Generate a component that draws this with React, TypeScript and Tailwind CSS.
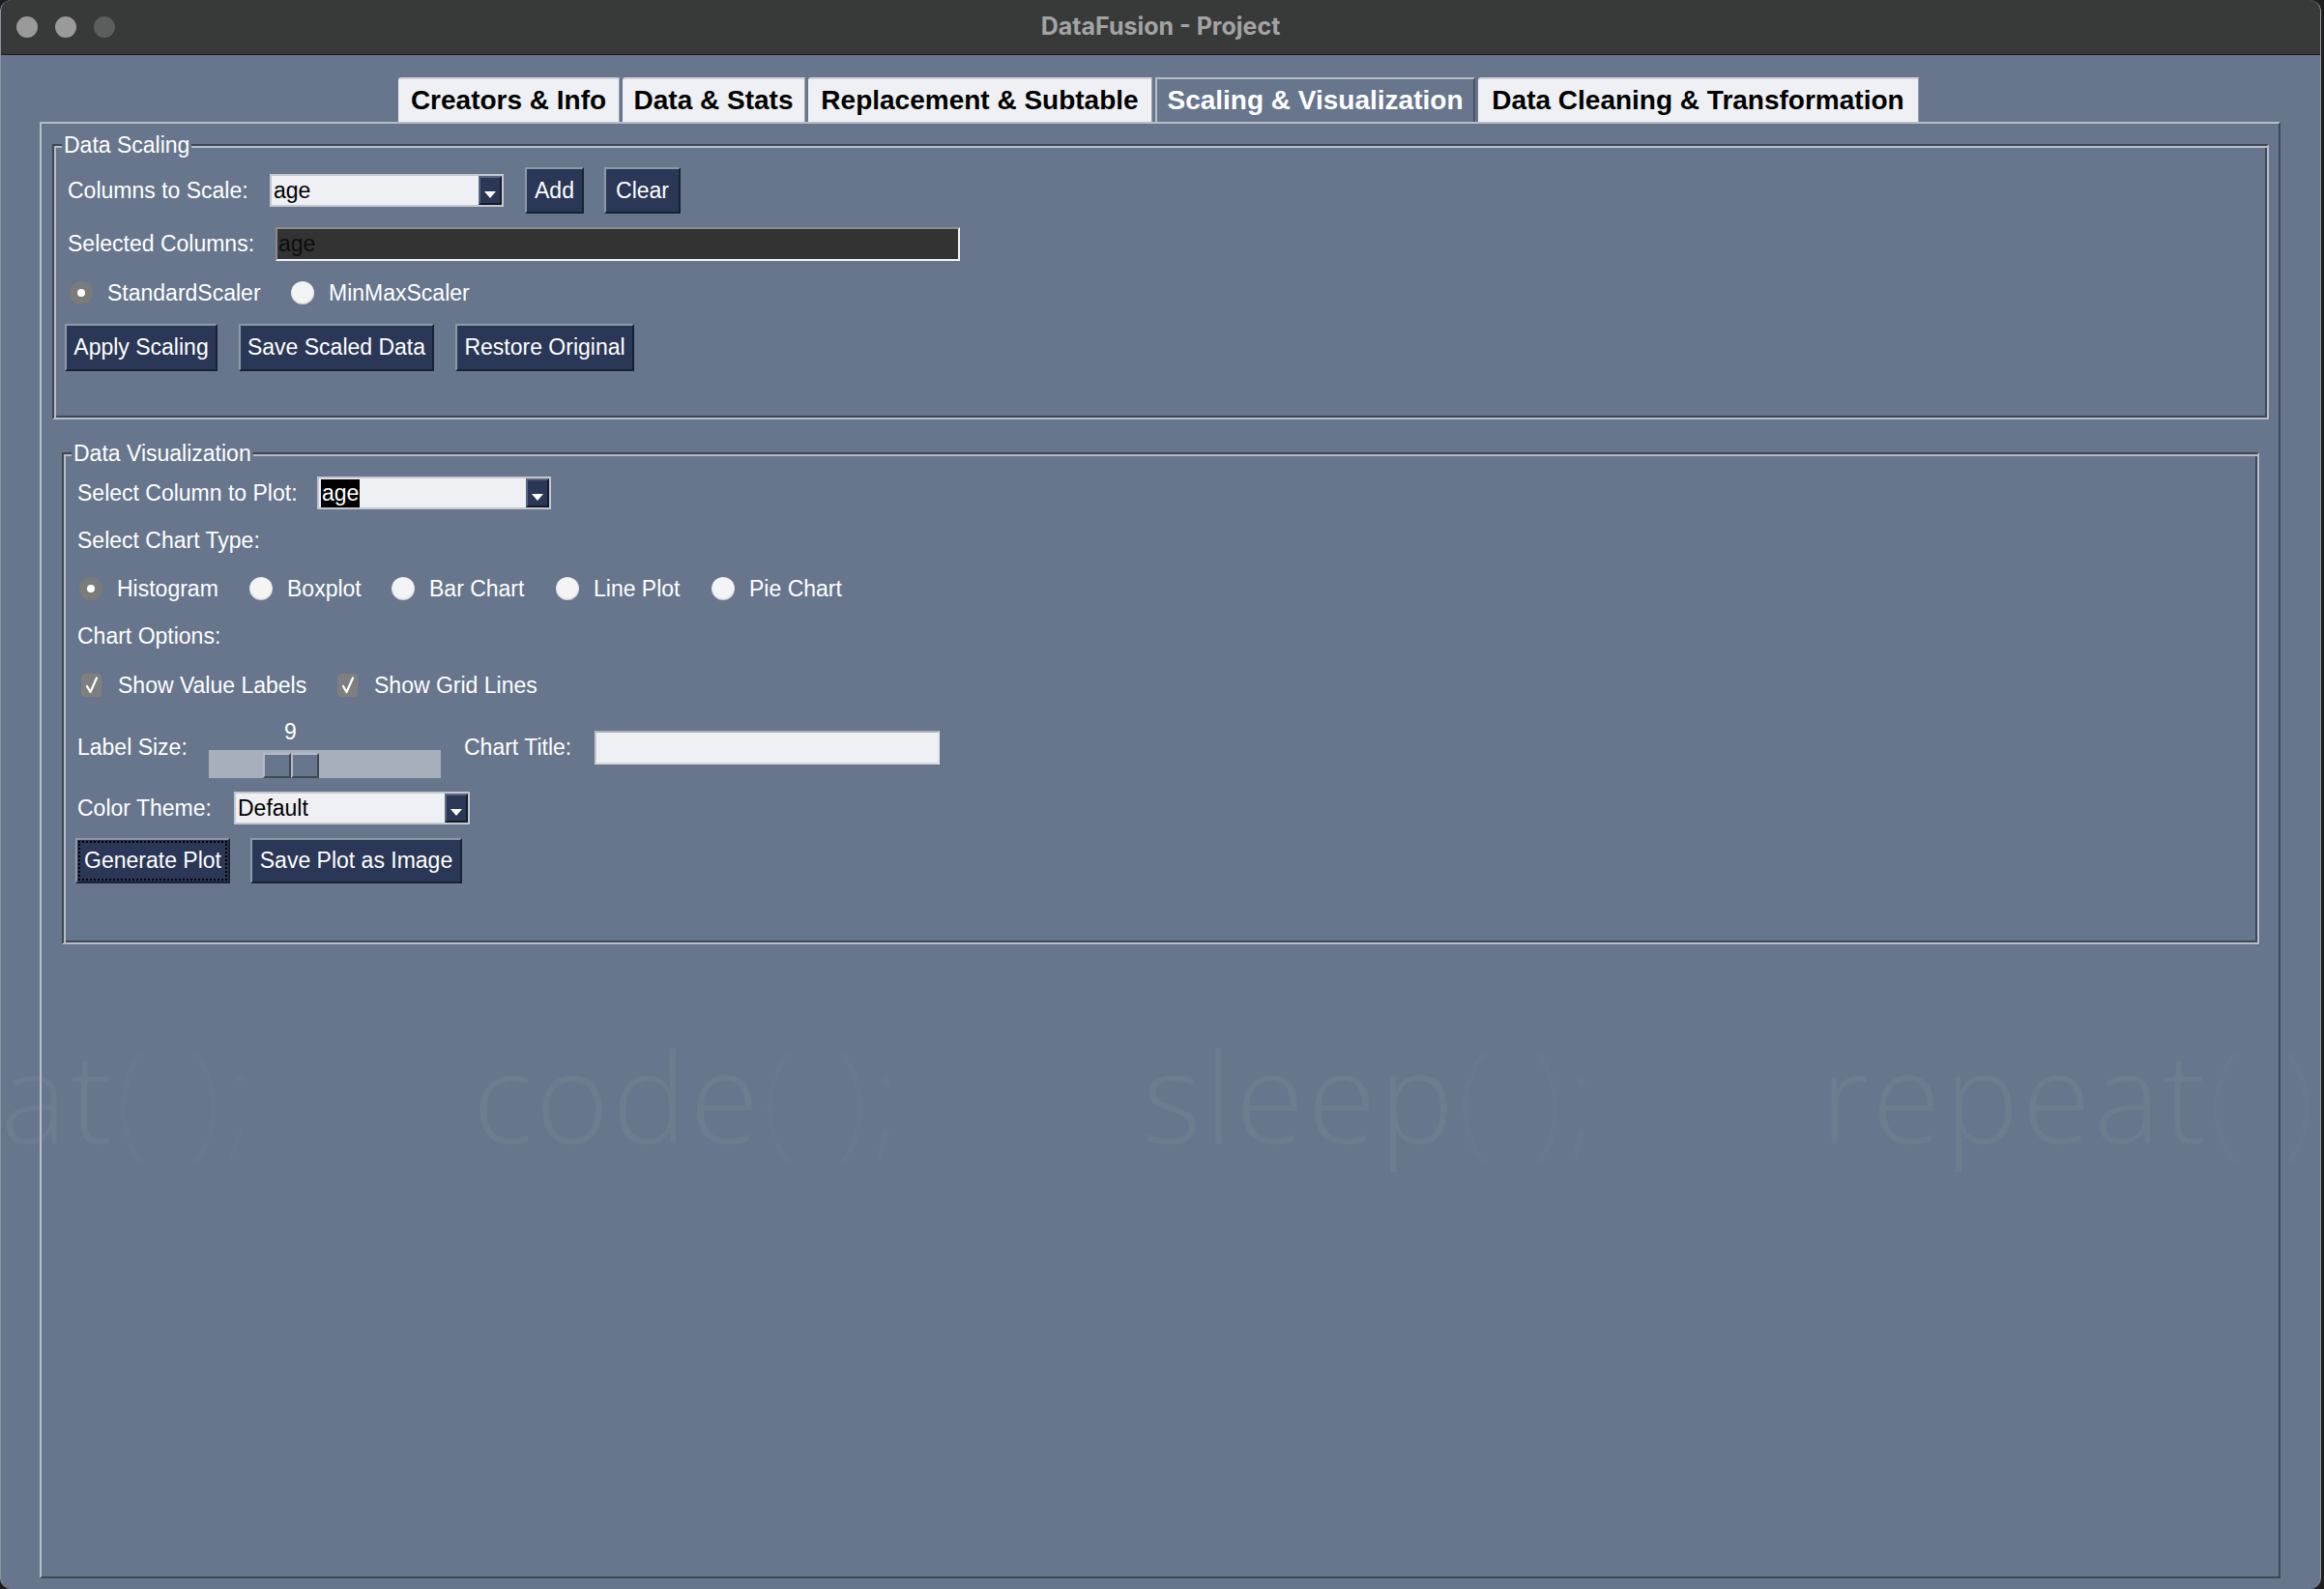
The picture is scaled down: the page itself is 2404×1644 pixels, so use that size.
import React from "react";

type Kids = { children?: React.ReactNode; className?: string };

function Btn({ children, className = "", focused = false }: Kids & { focused?: boolean }) {
  return (
    <button
      type="button"
      className={`flex h-full items-center justify-center border-2 border-t-[#8f98a7] border-l-[#8f98a7] border-r-[#1a2132] border-b-[#1a2132] bg-[#2b3756] text-[23px] leading-none text-white ${
        focused ? "outline-2 outline-dotted outline-offset-[-5px] outline-black" : ""
      } ${className}`}
    >
      {children}
    </button>
  );
}

function Arrow() {
  return (
    <span className="flex w-[24px] shrink-0 items-end justify-center border-2 border-t-[#5b6680] border-l-[#5b6680] border-r-[#141a28] border-b-[#141a28] bg-[#2b3756] pb-[5px]">
      <svg width="12" height="7" viewBox="0 0 12 7">
        <path d="M0 0H12L6 7Z" fill="#ffffff" />
      </svg>
    </span>
  );
}

function Combo({ children, className = "" }: Kids) {
  return (
    <div className={`flex h-[34px] border-2 border-[#c3c8d0] bg-[#eef0f3] ${className}`}>
      <div className="flex flex-1 items-center pl-[2px] text-[23px] leading-none text-black">{children}</div>
      <Arrow />
    </div>
  );
}

function Radio({ on = false }: { on?: boolean }) {
  return on ? (
    <span className="flex h-[24px] w-[24px] shrink-0 items-center justify-center rounded-full bg-[#7b7b7b]">
      <span className="h-[8px] w-[8px] rounded-full bg-white" />
    </span>
  ) : (
    <span className="h-[24px] w-[24px] shrink-0 rounded-full bg-[#f4f4f4] shadow-[inset_0_-1px_2px_rgba(0,0,0,0.18)]" />
  );
}

function RadioItem({ on = false, label, className = "" }: { on?: boolean; label: string; className?: string }) {
  return (
    <div className={`flex items-center gap-[15px] ${className}`}>
      <Radio on={on} />
      <span className="text-[23px] leading-none text-white">{label}</span>
    </div>
  );
}

function Check({ label, className = "" }: { label: string; className?: string }) {
  return (
    <div className={`flex items-center gap-[17px] ${className}`}>
      <span className="flex h-[24px] w-[21px] shrink-0 items-center justify-center rounded-[4px] bg-[#7f7f7f]">
        <svg width="14" height="18" viewBox="0 0 14 18">
          <path d="M2 10 L5.5 16 L12 1.5" fill="none" stroke="#ffffff" strokeWidth="2.2" strokeLinecap="round" strokeLinejoin="round" />
        </svg>
      </span>
      <span className="text-[23px] leading-none text-white">{label}</span>
    </div>
  );
}

function Group({ title, children, className = "" }: Kids & { title: string }) {
  return (
    <div
      className={`relative flex flex-col border-2 border-t-[#3f4756] border-l-[#3f4756] border-r-[#b7bec9] border-b-[#b7bec9] shadow-[inset_2px_2px_0_#b7bec9,inset_-2px_-2px_0_#3f4756] ${className}`}
    >
      <span className="absolute left-[8px] top-[-16px] bg-[#67768d] px-[2px] text-[23px] leading-[30px] text-white">
        {title}
      </span>
      {children}
    </div>
  );
}

function Label({ children, className = "" }: Kids) {
  return <span className={`shrink-0 text-[23px] leading-none text-white ${className}`}>{children}</span>;
}

function Tab({ children, active = false, className = "" }: Kids & { active?: boolean }) {
  return active ? (
    <div
      className={`relative z-10 mb-[-2px] flex h-[48px] items-center justify-center border-t-2 border-l-2 border-r-2 border-t-[#b7bec9] border-l-[#b7bec9] border-r-[#4a5464] bg-[#67768d] pb-[2px] text-[28px] font-bold leading-none text-white ${className}`}
    >
      {children}
    </div>
  ) : (
    <div
      className={`flex h-[46px] items-center justify-center rounded-tl-[3px] border-t-2 border-r border-t-[#cfd3d9] border-r-[#9aa1ab] bg-[#eef0f3] text-[28px] font-bold leading-none text-black ${className}`}
    >
      {children}
    </div>
  );
}

// faint "eat(); code(); sleep(); repeat();" backdrop behind the notebook
function Watermark() {
  const words: [string, string][] = [
    ["eat", "w-[563px]"],
    ["code", "w-[693px]"],
    ["sleep", "w-[701px]"],
    ["repeat", "w-[600px]"],
  ];
  return (
    <div className="pointer-events-none absolute left-[-75px] top-[1068px] z-0 flex font-['Open_Sans',sans-serif] text-[130px] font-light leading-none tracking-[3px] text-[#6e7c90]">
      {words.map(([w, cls]) => (
        <span key={w} className={`shrink-0 whitespace-pre ${cls}`}>
          {w}
          <span className="text-[#69788e]">( );</span>
        </span>
      ))}
    </div>
  );
}

export default function App() {
  return (
    <div className="h-[1644px] w-[2404px] overflow-hidden bg-[#1d1d1d] font-['Liberation_Sans',Arial,sans-serif]">
      <div className="relative flex h-[1644px] w-[2401px] flex-col overflow-hidden rounded-[12px] border-x border-[#8c95a2] bg-[#67768d]">
        <Watermark />

        {/* title bar */}
        <div className="relative z-10 grid h-[57px] shrink-0 grid-cols-[1fr_auto_1fr] items-center border-b border-[#1b1b1b] bg-[#383a3a]">
          <div className="flex gap-[18px] pl-[16px]">
            <span className="h-[22px] w-[22px] rounded-full bg-[#9a9a9a]" />
            <span className="h-[22px] w-[22px] rounded-full bg-[#9a9a9a]" />
            <span className="h-[22px] w-[22px] rounded-full bg-[#5c5d5d]" />
          </div>
          <span className="font-['Inter',sans-serif] text-[25px] font-bold text-[#a3a3a3]">DataFusion - Project</span>
          <span />
        </div>

        {/* notebook tabs */}
        <div className="relative z-10 mt-[23px] flex h-[46px] items-end gap-[3px] pl-[411px]">
          <Tab className="w-[229px]">Creators &amp; Info</Tab>
          <Tab className="w-[189px]">Data &amp; Stats</Tab>
          <Tab className="w-[356px]">Replacement &amp; Subtable</Tab>
          <Tab active className="w-[331px]">
            Scaling &amp; Visualization
          </Tab>
          <Tab className="w-[456px]">Data Cleaning &amp; Transformation</Tab>
        </div>

        {/* notebook pane */}
        <div className="relative z-10 ml-[40px] flex h-[1507px] w-[2318px] flex-col border-2 border-t-[#b7bec9] border-l-[#b7bec9] border-r-[#3f4756] border-b-[#3f4756]">
          <Group title="Data Scaling" className="ml-[11px] mt-[21px] w-[2293px] pb-[48px]">
            <div className="ml-[14px] mt-[22px] flex h-[48px] items-center">
              <Label className="w-[209px]">Columns to Scale:</Label>
              <Combo className="w-[242px]">age</Combo>
              <div className="ml-[22px] flex h-[48px] gap-[21px]">
                <Btn className="w-[61px]">Add</Btn>
                <Btn className="w-[79px]">Clear</Btn>
              </div>
            </div>

            <div className="ml-[14px] mt-[14px] flex h-[35px] items-center">
              <Label className="w-[215px]">Selected Columns:</Label>
              <div className="flex h-[35px] w-[708px] items-center border-2 border-t-[#8c8c8c] border-l-[#8c8c8c] border-r-[#f4f4f4] border-b-[#f4f4f4] bg-[#333333] pl-[1px] text-[23px] leading-none text-[#0d0d0d]">
                age
              </div>
            </div>

            <div className="ml-[16px] mt-[18px] flex h-[30px] items-center">
              <RadioItem on label="StandardScaler" className="w-[229px]" />
              <RadioItem label="MinMaxScaler" />
            </div>

            <div className="ml-[11px] mt-[17px] flex h-[49px] gap-[22px]">
              <Btn className="w-[158px]">Apply Scaling</Btn>
              <Btn className="w-[202px]">Save Scaled Data</Btn>
              <Btn className="w-[185px]">Restore Original</Btn>
            </div>
          </Group>

          <Group title="Data Visualization" className="ml-[21px] mt-[34px] w-[2273px] pb-[61px]">
            <div className="ml-[14px] mt-[23px] flex h-[34px] items-center">
              <Label className="w-[248px]">Select Column to Plot:</Label>
              <Combo className="w-[242px]">
                <span className="bg-black px-[1px] py-[3px] text-white">age</span>
              </Combo>
            </div>

            <div className="ml-[14px] mt-[17px] flex h-[30px] items-center">
              <Label>Select Chart Type:</Label>
            </div>

            <div className="ml-[16px] mt-[20px] flex h-[30px] items-center">
              <RadioItem on label="Histogram" className="w-[176px]" />
              <RadioItem label="Boxplot" className="w-[147px]" />
              <RadioItem label="Bar Chart" className="w-[170px]" />
              <RadioItem label="Line Plot" className="w-[161px]" />
              <RadioItem label="Pie Chart" />
            </div>

            <div className="ml-[14px] mt-[19px] flex h-[30px] items-center">
              <Label>Chart Options:</Label>
            </div>

            <div className="ml-[18px] mt-[21px] flex h-[30px] items-center">
              <Check label="Show Value Labels" className="w-[265px]" />
              <Check label="Show Grid Lines" />
            </div>

            <div className="ml-[14px] mt-[18px] flex h-[63px] items-center">
              <Label className="w-[136px]">Label Size:</Label>
              <div className="flex w-[240px] flex-col">
                <div className="flex h-[30px] items-center">
                  <span className="ml-[56px] w-[57px] text-center text-[23px] leading-none text-white">9</span>
                </div>
                <div className="mt-[4px] flex h-[29px] w-[240px] items-end bg-[#a6afbb] pl-[56px]">
                  <div className="flex h-[26px]">
                    <span className="h-[26px] w-[29px] border-2 border-t-[#b4bcc7] border-l-[#b4bcc7] border-r-[#3f4756] border-b-[#3f4756] bg-[#67768d]" />
                    <span className="h-[26px] w-[29px] border-2 border-t-[#b4bcc7] border-l-[#b4bcc7] border-r-[#3f4756] border-b-[#3f4756] bg-[#67768d]" />
                  </div>
                </div>
              </div>
              <Label className="ml-[24px] w-[135px]">Chart Title:</Label>
              <div className="h-[35px] w-[357px] border-2 border-t-[#a9aeb6] border-l-[#c6cad0] border-r-[#e4e7eb] border-b-[#d4d8dd] bg-[#eef0f3]" />
            </div>

            <div className="ml-[14px] mt-[14px] flex h-[34px] items-center">
              <Label className="w-[162px]">Color Theme:</Label>
              <Combo className="w-[244px]">Default</Combo>
            </div>

            <div className="ml-[12px] mt-[14px] flex h-[47px] gap-[21px]">
              <Btn focused className="w-[160px]">
                Generate Plot
              </Btn>
              <Btn className="w-[219px]">Save Plot as Image</Btn>
            </div>
          </Group>
        </div>
      </div>
    </div>
  );
}
